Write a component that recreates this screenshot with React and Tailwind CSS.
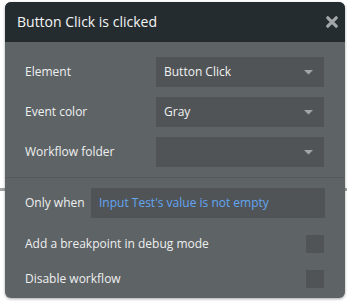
export default function App() {
  const font = { fontFamily: '"Open Sans", "Noto Sans", sans-serif' }

  const Caret = () => (
    <svg width="9" height="5" viewBox="0 0 9 5" className="shrink-0">
      <path d="M0 0h9L4.5 4.5z" fill="#a2a6a8" />
    </svg>
  )

  const Dropdown = ({ value }) => (
    <div className="w-[168px] h-[30px] bg-[#505457] flex items-center justify-between pl-[8px] pr-[11px]">
      <span className="text-[12px] leading-[18px] text-[#f1f2f2]">{value}</span>
      <Caret />
    </div>
  )

  const rows = [
    ['Element', 'Button Click'],
    ['Event color', 'Gray'],
    ['Workflow folder', ''],
  ]

  return (
    <div className="relative w-[347px] h-[301px] bg-white overflow-hidden" style={font}>
      {/* page line behind the popup */}
      <div className="absolute left-0 right-0 top-[188px] h-[3px] bg-[#a3a3a3]" />

      <div className="relative ml-[5px] mt-[2px] w-[340px] rounded-[6px] overflow-hidden bg-[#5e6366] shadow-[0_1px_3px_rgba(0,0,0,0.35)]">
        {/* Header */}
        <div className="h-[40px] bg-[#252c2f] flex items-center justify-between pl-[12px] pr-[7px]">
          <h1 className="text-[14px] text-[#f4f5f5] leading-none">Button Click is clicked</h1>
          <svg width="12" height="12" viewBox="0 0 12 12">
            <path d="M1.8 1.8l8.4 8.4M10.2 1.8l-8.4 8.4" stroke="#a1a6a8" strokeWidth="3.2" strokeLinecap="round" />
          </svg>
        </div>

        {/* Dropdown rows */}
        <div className="flex flex-col gap-[10px] pt-[15px] pb-[10px] pl-[20px]">
          {rows.map(([label, value]) => (
            <div key={label} className="flex items-center">
              <span className="w-[131px] text-[12px] leading-[18px] text-[#eef0f0]">{label}</span>
              <Dropdown value={value} />
            </div>
          ))}
        </div>

        <div className="h-px bg-[#55595c]" />

        {/* Condition + checkboxes */}
        <div className="pt-[10px] pb-[10px] pl-[20px] pr-[20px]">
          <div className="flex items-center">
            <span className="w-[66px] text-[12px] leading-[18px] text-[#eef0f0]">Only when</span>
            <div className="w-[234px] h-[30px] bg-[#505457] flex items-center pl-[8px]">
              <span className="text-[12px] leading-[18px] text-[#62a6f2]">Input Test's value is not empty</span>
            </div>
          </div>
          <div className="flex items-center justify-between mt-[17px] pr-[1px]">
            <span className="text-[12px] leading-[18px] text-[#eef0f0]">Add a breakpoint in debug mode</span>
            <div className="w-[18px] h-[18px] bg-[#505457]" />
          </div>
          <div className="flex items-center justify-between mt-[17px] pr-[1px]">
            <span className="text-[12px] leading-[18px] text-[#eef0f0]">Disable workflow</span>
            <div className="w-[18px] h-[18px] bg-[#505457]" />
          </div>
        </div>
      </div>
    </div>
  )
}
